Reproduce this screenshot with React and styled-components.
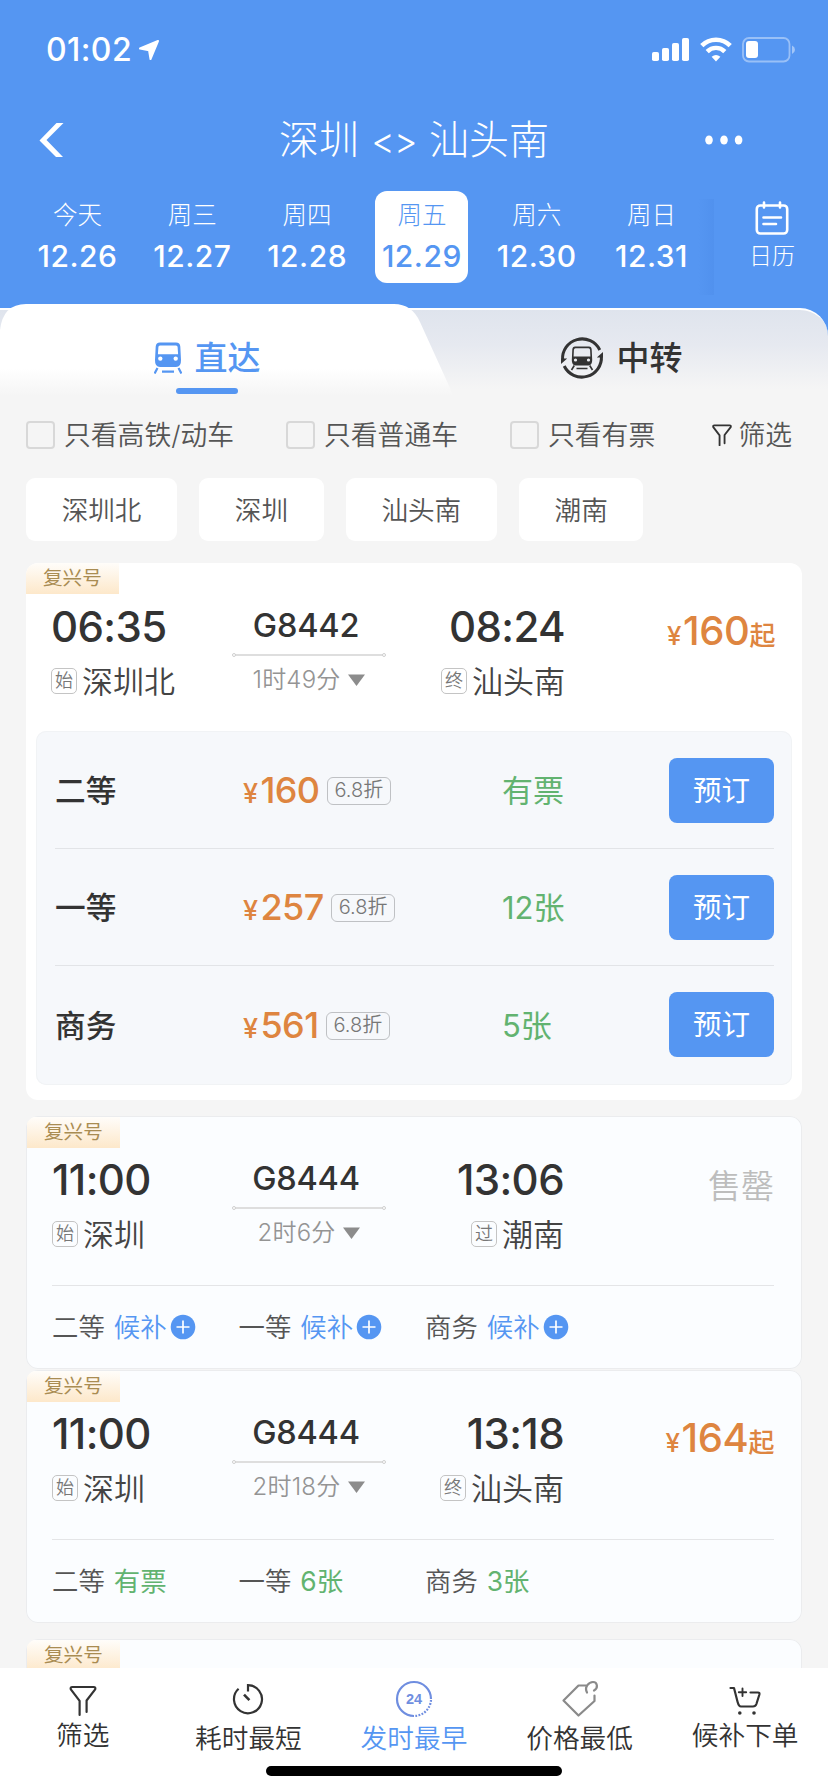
import { useState } from 'react';
import styled, { createGlobalStyle } from 'styled-components';

const BLUE = '#5596f2';
const ORANGE = '#de8540';
const GREEN = '#62b370';

const GlobalStyle = createGlobalStyle`
  *,
  *::before,
  *::after {
    box-sizing: border-box;
  }

  body {
    margin: 0;
    background: #f5f5f5;
    font-family: Inter, "Noto Sans CJK SC", sans-serif;
    color: #333;
  }

  button {
    font: inherit;
    color: inherit;
    border: 0;
    padding: 0;
    background: none;
  }

  svg {
    display: block;
    flex: none;
  }
`;

const Screen = styled.div`
  display: flex;
  flex-direction: column;
  width: 828px;
  height: 1792px;
  overflow: hidden;
  background: linear-gradient(${BLUE} 380px, #f5f5f5 380px);
`;

const StatusBar = styled.div`
  display: flex;
  align-items: center;
  height: 99px;
  padding: 0 32px 0 46px;
  color: #fff;
`;

const Clock = styled.span`
  font-size: 32px;
  font-weight: 500;
  letter-spacing: 0.4px;
  line-height: 40px;
  margin-right: auto;
  display: flex;
  align-items: center;
  gap: 6px;
`;

const StatusIcons = styled.div`
  display: flex;
  align-items: center;
  gap: 10px;
`;

const NavBar = styled.div`
  display: grid;
  grid-template-columns: 200px 1fr 200px;
  align-items: center;
  height: 82px;
  padding: 0 38px;
  color: #fff;
`;

const RouteTitle = styled.h1`
  margin: 0;
  text-align: center;
  font-size: 40px;
  font-weight: 300;
  line-height: 48px;
  white-space: nowrap;
`;

const Arrows = styled.span`
  margin: 0 1px;
  font-size: 36px;
  letter-spacing: -0.8px;
`;

const MoreButton = styled.button`
  justify-self: end;
  margin-right: 46px;
`;

const DateBar = styled.div`
  display: flex;
  height: 123px;
  padding: 10px 0 0 31px;
  color: #fff;
`;

const Day = styled.button`
  flex: none;
  width: 93px;
  height: 92px;
  margin-right: 21.8px;
  padding-top: 8px;
  display: flex;
  flex-direction: column;
  align-items: center;
  border-radius: 12px;
  background: ${({ $active }) => ($active ? '#fff' : 'transparent')};
  color: ${({ $active }) => ($active ? BLUE : '#fff')};
`;

const DayName = styled.span`
  font-size: 24.5px;
  font-weight: 300;
  line-height: 32px;
`;

const DayDate = styled.span`
  font-size: 30px;
  font-weight: 500;
  line-height: 50px;
  letter-spacing: 0.5px;
  white-space: nowrap;
`;

const Calendar = styled.button`
  position: relative;
  flex: 1;
  padding: 10px 0 0 2px;
  margin-left: -6px;
  height: 113px;
  display: flex;
  flex-direction: column;
  align-items: center;
  color: #fff;
  font-size: 23px;
  font-weight: 300;
  line-height: 42px;

  &::before {
    content: '';
    position: absolute;
    left: -16px;
    top: 8px;
    width: 16px;
    height: 96px;
    background: linear-gradient(to right, rgba(60, 120, 215, 0), rgba(60, 120, 215, 0.16));
  }
`;

const Body = styled.main`
  flex: 1;
  min-height: 0;
  display: flex;
  flex-direction: column;
  overflow: hidden;
`;

const Tabs = styled.div`
  display: grid;
  grid-template-columns: 414px 414px;
  position: relative;
  flex: none;
  height: 92px;

  &::before {
    content: '';
    position: absolute;
    inset: 4px 0 0;
    border-top: 2px solid #fff;
    border-radius: 0 28px 0 0;
    background: linear-gradient(#dfe4ed, #e6e9f0 40%, #f5f5f5 92%);
  }

  &::after {
    content: '';
    position: absolute;
    inset: 0;
    background: linear-gradient(#fff 70%, #f5f5f5);
    clip-path: path('M0 92V26Q3 0 26 0H394Q412 0 420 18L450 84Q452 88 452 92Z');
  }
`;

const Tab = styled.button`
  position: relative;
  z-index: 1;
  display: flex;
  align-items: center;
  justify-content: center;
  height: 92px;
  padding-top: 16px;
  gap: 13px;
  font-size: 33px;
  font-weight: 500;
  line-height: 40px;
  color: ${({ $active }) => ($active ? BLUE : '#333')};

  ${({ $active }) => $active && `
    &::after {
      content: '';
      position: absolute;
      left: 176px;
      bottom: 2px;
      width: 62px;
      height: 6px;
      border-radius: 3px;
      background: ${BLUE};
    }
  `}
`;

const Content = styled.div`
  flex: 1;
  min-height: 0;
  padding: 24px 26px 0;
  background: #f5f5f5;
`;

const Filters = styled.div`
  display: flex;
  align-items: center;
  height: 30px;
  color: #555;
  font-size: 26.8px;
  font-weight: 350;
  line-height: 30px;
`;

const Check = styled.label`
  display: flex;
  align-items: center;
  gap: 9px;
  width: ${({ $width }) => $width}px;
  white-space: nowrap;
`;

const Box = styled.span`
  flex: none;
  width: 29px;
  height: 28px;
  border: 2px solid #d8d8d8;
  border-radius: 4px;
`;

const FilterLink = styled.button`
  display: flex;
  align-items: center;
  gap: 6px;
  margin-left: auto;
  margin-right: 10px;
  line-height: 30px;
`;

const Chips = styled.div`
  display: flex;
  gap: 22px;
  margin-top: 28px;
`;

const Chip = styled.button`
  height: 63px;
  padding: 0 35.7px;
  border-radius: 9px;
  background: #fff;
  color: #555;
  font-size: 26.6px;
  font-weight: 350;
  line-height: 64px;
`;

const TrainCard = styled.article`
  position: relative;
  height: ${({ $open }) => ($open ? 537 : 253)}px;
  margin-top: ${({ $gap }) => $gap}px;
  padding: 42px 28px 0 26px;
  border-radius: 12px;
  overflow: hidden;
  background: ${({ $open }) => ($open ? '#fff' : '#fbfdff')};
  box-shadow: ${({ $open }) => ($open ? 'none' : 'inset 0 0 0 1px #ebecee')};
`;

const ModelBadge = styled.span`
  position: absolute;
  left: ${({ $open }) => ($open ? 0 : 1)}px;
  top: ${({ $open }) => ($open ? 0 : 1)}px;
  width: 93px;
  height: 31px;
  padding-left: 17px;
  background: linear-gradient(#fffdfa, #fde8ca);
  color: #a98c52;
  font-size: 19.6px;
  line-height: 31px;
`;

const Trip = styled.div`
  display: grid;
  grid-template-columns: 180px 154px 178px 1fr;

  ${({ $open }) => $open && `
    grid-template-columns: 181px 154px 179px 1fr;
    margin: 0 -1px;
  `}
`;

const Stop = styled.div`
  display: flex;
  flex-direction: column;
  align-items: ${({ $end }) => ($end ? 'flex-end' : 'flex-start')};
`;

const Time = styled.span`
  font-size: 42px;
  font-weight: 500;
  line-height: 44px;
  letter-spacing: -0.6px;
`;

const Station = styled.span`
  display: flex;
  align-items: center;
  gap: 5px;
  margin-top: 13px;
  color: #444;
  font-size: 31px;
  font-weight: 350;
  line-height: 40px;
`;

const StopType = styled.span`
  display: grid;
  place-items: center;
  width: 26px;
  height: 26px;
  margin-top: -2px;
  border: 1.5px solid #c4c4c4;
  border-radius: 5px;
  color: #777;
  font-size: 18px;
  line-height: 22px;
`;

const TrainInfo = styled.div`
  display: flex;
  flex-direction: column;
  align-items: center;
`;

const TrainNo = styled.span`
  padding-right: 6px;
  font-size: 32.5px;
  line-height: 42px;
  font-weight: 500;
  letter-spacing: -0.2px;
`;

const Line = styled.span`
  position: relative;
  width: 148px;
  height: 2px;
  margin-top: 7px;
  background: #dedede;

  &::before,
  &::after {
    content: '';
    position: absolute;
    top: -1px;
    width: 4px;
    height: 4px;
    border: 1px solid #cfcfcf;
    border-radius: 50%;
    background: #fff;
  }

  &::before {
    left: -3px;
  }

  &::after {
    right: -3px;
  }
`;

const Duration = styled.span`
  display: flex;
  align-items: center;
  gap: 8px;
  margin-top: 8px;
  color: #949494;
  font-size: 24px;
  font-weight: 350;
  line-height: 32px;
  letter-spacing: 0.2px;
`;

const Fare = styled.div`
  justify-self: end;
  display: flex;
  align-items: baseline;
  height: 48px;
  padding-top: 4px;
  color: ${ORANGE};
  font-size: 40px;
  font-weight: 500;
  line-height: 44px;
  letter-spacing: -0.4px;
`;

const Small = styled.span`
  font-size: ${({ $size }) => $size}px;
  margin-right: ${({ $gap }) => $gap || 0}px;
`;

const SoldOut = styled.span`
  justify-self: end;
  padding-top: 6px;
  color: #bdbdbd;
  font-size: 33px;
  font-weight: 350;
  line-height: 44px;
`;

const SeatPanel = styled.div`
  margin: 29px -18px 0 -16px;
  padding: 1px 18px 2px 19px;
  border-radius: 10px;
  background: #f6f8fb;
  box-shadow: inset 0 0 0 1px #f1f3f5;
`;

const SeatRow = styled.div`
  display: grid;
  grid-template-columns: 188px 258px 1fr 105px;
  align-items: center;
  height: 117px;
  border-bottom: ${({ $last }) => ($last ? 0 : '1px solid #e2e4e7')};
`;

const SeatName = styled.span`
  padding-top: 2px;
  font-size: 30.7px;
  font-weight: 500;
  line-height: 40px;
`;

const SeatPrice = styled.span`
  display: flex;
  align-items: baseline;
  padding-top: 4px;
  color: ${ORANGE};
  font-size: 36px;
  font-weight: 500;
  line-height: 44px;
  letter-spacing: -0.6px;
`;

const Discount = styled.span`
  align-self: center;
  margin: -2px 0 0 7px;
  padding: 0 7px;
  height: 28px;
  border: 1.5px solid #bfc1c4;
  border-radius: 6px;
  color: #777;
  font-size: 20px;
  font-weight: 350;
  line-height: 25px;
  letter-spacing: 0;
`;

const SeatStock = styled.span`
  padding: 2px 0 0 1px;
  color: ${GREEN};
  font-size: 31px;
  font-weight: 400;
  line-height: 40px;
`;

const BookButton = styled.button`
  height: 65px;
  border-radius: 8px;
  background: ${BLUE};
  color: #fff;
  font-size: 28.5px;
  line-height: 65px;
`;

const SeatSummary = styled.div`
  display: grid;
  grid-template-columns: 186.5px 186.5px 1fr;
  align-items: center;
  height: 83px;
  margin-top: 30px;
  border-top: 1px solid #e4e5e7;
  color: #555;
  font-size: 26.4px;
  font-weight: 350;
  line-height: 36px;
`;

const SeatState = styled.span`
  display: flex;
  align-items: center;
  gap: 9px;
`;

const Stock = styled.span`
  display: flex;
  align-items: center;
  gap: 3px;
  color: ${({ $wait }) => ($wait ? BLUE : GREEN)};
  font-weight: ${({ $wait }) => ($wait ? 350 : 400)};
`;

const SortBar = styled.nav`
  flex: none;
  height: 124px;
  background: #fff;
  display: flex;
  flex-direction: column;
  align-items: center;
`;

const SortItems = styled.div`
  display: grid;
  grid-template-columns: repeat(5, 1fr);
  width: 100%;
  height: 98px;
`;

const SortItem = styled.button`
  display: flex;
  flex-direction: column;
  align-items: center;
  padding-top: ${({ $tight }) => ($tight ? 17 : 12)}px;
  color: ${({ $active }) => ($active ? BLUE : '#333')};
  font-size: 26.7px;
  font-weight: 350;
  line-height: 36px;

  svg {
    margin-bottom: ${({ $tight }) => ($tight ? 0 : 2)}px;
  }
`;

const HomeIndicator = styled.span`
  width: 296px;
  height: 10px;
  border-radius: 5px;
  background: #000;
`;

const LocationIcon = () => (
  <svg width="22" height="22" viewBox="0 0 22 22" fill="#fff" stroke="#fff" strokeWidth="2" strokeLinejoin="round">
    <path d="M20 2L2 9.5L11 11.2L12.5 20Z" />
  </svg>
);

const SignalIcon = () => (
  <svg width="38" height="26" viewBox="0 0 38 26" fill="#fff">
    <rect x="0" y="15" width="7" height="9" rx="1.8" />
    <rect x="10" y="11" width="7" height="13" rx="1.8" />
    <rect x="20" y="6" width="7" height="18" rx="1.8" />
    <rect x="30" y="1" width="7" height="23" rx="1.8" />
  </svg>
);

const WifiIcon = () => (
  <svg width="32" height="26" viewBox="0 0 32 26" fill="none" stroke="#fff">
    <path d="M1.8 8.6A20 20 0 0 1 30.2 8.6" strokeWidth="4.6" />
    <path d="M7.2 14.6A12.3 12.3 0 0 1 24.8 14.6" strokeWidth="4.4" />
    <path d="M16 24.5L11.6 19.8Q16 16.2 20.4 19.8Z" fill="#fff" stroke="none" />
  </svg>
);

const BatteryIcon = () => (
  <svg width="54" height="26" viewBox="0 0 54 26">
    <rect x="1" y="1" width="46.5" height="23.5" rx="6" fill="none" stroke="#fff" strokeOpacity="0.4" strokeWidth="1.8" />
    <rect x="4" y="4" width="12" height="17" rx="3" fill="#fff" />
    <path d="M50 8.5Q53 10 53 12.8T50 17Z" fill="#fff" fillOpacity="0.45" />
  </svg>
);

const BackIcon = () => (
  <svg width="26" height="36" viewBox="0 0 26 36" fill="#fff">
    <path d="M18.5 1H25.5L8.5 18L25 35H18L1.5 18.5Z" />
  </svg>
);

const MoreIcon = () => (
  <svg width="40" height="12" viewBox="0 0 40 12" fill="#fff">
    <ellipse cx="5" cy="6" rx="3.8" ry="4.5" />
    <ellipse cx="20" cy="6" rx="3.8" ry="4.5" />
    <ellipse cx="34.6" cy="6" rx="3.8" ry="4.5" />
  </svg>
);

const CalendarIcon = () => (
  <svg width="34" height="34" viewBox="0 0 34 34" fill="none" stroke="#fff" strokeWidth="2.6" strokeLinecap="round">
    <rect x="1.8" y="4.5" width="30.4" height="28" rx="3.5" />
    <path d="M9 1.5V6.5M25 1.5V6.5M8.5 16.5H26M8.5 23H21" />
  </svg>
);

const TrainIcon = () => (
  <svg width="28" height="32" viewBox="0 0 28 32" fill={BLUE}>
    <path fillRule="evenodd" d="M6 0.5H22Q26 0.5 26.3 4.5L27 18Q27.2 25 22 25H6Q0.8 25 1 18L1.7 4.5Q2 0.5 6 0.5ZM6 3.5Q4.5 3.5 4.4 5L3.9 12.3H24.1L23.6 5Q23.5 3.5 22 3.5ZM6.3 14.4A2.2 2.2 0 1 0 6.3 18.8A2.2 2.2 0 1 0 6.3 14.4ZM21.7 14.4A2.2 2.2 0 1 0 21.7 18.8A2.2 2.2 0 1 0 21.7 14.4Z" />
    <path d="M3.5 26L0.6 31.5M24.5 26L27.4 31.5M8 29.6H20" stroke={BLUE} strokeWidth="2.2" />
  </svg>
);

const TransferIcon = () => (
  <svg width="44" height="44" viewBox="0 0 44 44" fill="none" stroke="#333">
    <path d="M2.6 24A19.6 19.6 0 0 1 39.8 14" strokeWidth="3" />
    <path d="M41.4 20A19.6 19.6 0 0 1 4.2 30" strokeWidth="3" />
    <path d="M1 28V22.4L7.2 22.6Z M43 16V21.6L36.8 21.4Z" fill="#333" stroke="none" />
    <path fillRule="evenodd" fill="#333" stroke="none" d="M15 10.5H29Q31.5 10.5 31.7 13.5L32.2 24Q32.2 29.4 28.5 29.4H15.5Q11.8 29.4 11.8 24L12.3 13.5Q12.5 10.5 15 10.5ZM15.5 12.3Q14 12.3 13.9 14L13.6 20.5H30.4L30.1 14Q30 12.3 28.5 12.3ZM15.5 22.4A1.6 1.6 0 1 0 15.5 25.6A1.6 1.6 0 1 0 15.5 22.4ZM28.5 22.4A1.6 1.6 0 1 0 28.5 25.6A1.6 1.6 0 1 0 28.5 22.4Z" />
    <path d="M14.3 29.5L11.5 34M29.7 29.5L32.5 34M16.5 32.5H27.5" strokeWidth="1.6" />
  </svg>
);

const FunnelIcon = ({ size, stroke }) => (
  <svg width={size} height={size * 1.14} viewBox="0 0 28 32" fill="none" stroke="#333" strokeWidth={stroke} strokeLinecap="round" strokeLinejoin="round">
    <path d="M10.6 30V16L1.8 4.4Q1 2 3.4 2H24.6Q27 2 26.2 4.4L17.6 15.5V27" />
  </svg>
);

const CaretIcon = () => (
  <svg width="17" height="12" viewBox="0 0 17 12" fill="#8c8c8c">
    <path d="M0 0.5H17L8.5 12Z" />
  </svg>
);

const PlusIcon = () => (
  <svg width="26" height="26" viewBox="0 0 26 26">
    <circle cx="13" cy="13" r="12.3" fill={BLUE} />
    <path d="M6.5 13H19.5M13 6.5V19.5" stroke="#fff" strokeWidth="1.7" />
  </svg>
);

const TimerIcon = () => (
  <svg width="38" height="38" viewBox="0 0 38 38" fill="none" stroke="#333" strokeWidth="2.2">
    <path d="M9.6 8.8A14 14 0 1 0 19 5.2V11.5" />
    <path d="M15 14.6L20.4 20.2" strokeWidth="2.6" />
  </svg>
);

const DepartIcon = () => (
  <svg width="38" height="38" viewBox="0 0 38 38" fill="none" stroke="#6f8ee0" strokeWidth="2.2">
    <path d="M19 36A17 17 0 1 1 36 19" />
    <path d="M36 20A17 17 0 0 1 19.5 36" strokeDasharray="1.8 1.4" />
    <text x="19" y="24" textAnchor="middle" fill="#6f8ee0" stroke="none" fontFamily="Liberation Sans, sans-serif" fontSize="14.5" fontWeight="700">24</text>
  </svg>
);

const TagIcon = () => (
  <svg width="38" height="38" viewBox="0 0 38 38" fill="none" stroke="#8a8a8a" strokeWidth="2.2" strokeLinejoin="round" strokeLinecap="round">
    <path d="M25 5.5H17.5L2.5 20.5L17.5 35.5L33.5 21V15.5" />
    <path d="M26 12.5C23 7 28 2 32 2C36.5 2 37.5 8 33 10.5" />
  </svg>
);

const CartIcon = () => (
  <svg width="32" height="32" viewBox="0 0 32 32" fill="none" stroke="#333" strokeWidth="2.2" strokeLinecap="round" strokeLinejoin="round">
    <path d="M1.5 3H5L8.6 17Q9.8 21.5 12 21.5H24Q26.5 21.5 27.4 19L30.4 9.5Q30.8 7.5 29 7.5H21.5" />
    <path d="M13.5 3.5V11M9.8 7.3H17.2" strokeWidth="1.9" />
    <circle cx="10.8" cy="28" r="1.8" fill="#333" stroke="none" />
    <circle cx="25" cy="28" r="1.8" fill="#333" stroke="none" />
  </svg>
);

const days = [
  { name: '今天', date: '12.26' },
  { name: '周三', date: '12.27' },
  { name: '周四', date: '12.28' },
  { name: '周五', date: '12.29' },
  { name: '周六', date: '12.30' },
  { name: '周日', date: '12.31' },
];

const checks = [
  { label: '只看高铁/动车', width: 260 },
  { label: '只看普通车', width: 224 },
  { label: '只看有票', width: 160 },
];

const stations = ['深圳北', '深圳', '汕头南', '潮南'];

const trains = [
  {
    id: 1,
    gap: 22,
    no: 'G8442',
    duration: '1时49分',
    from: { time: '06:35', type: '始', name: '深圳北' },
    to: { time: '08:24', type: '终', name: '汕头南' },
    price: 160,
    open: true,
    seats: [
      { name: '二等', price: 160, stock: '有票' },
      { name: '一等', price: 257, stock: '12张' },
      { name: '商务', price: 561, stock: '5张' },
    ],
  },
  {
    id: 2,
    gap: 16,
    no: 'G8444',
    duration: '2时6分',
    from: { time: '11:00', type: '始', name: '深圳' },
    to: { time: '13:06', type: '过', name: '潮南' },
    seats: [{ name: '二等' }, { name: '一等' }, { name: '商务' }],
  },
  {
    id: 3,
    gap: 1,
    no: 'G8444',
    duration: '2时18分',
    from: { time: '11:00', type: '始', name: '深圳' },
    to: { time: '13:18', type: '终', name: '汕头南' },
    price: 164,
    seats: [
      { name: '二等', stock: '有票' },
      { name: '一等', stock: '6张' },
      { name: '商务', stock: '3张' },
    ],
  },
];

const sorts = [
  { label: '筛选', icon: <FunnelIcon size={28} stroke={2.2} />, tight: true },
  { label: '耗时最短', icon: <TimerIcon /> },
  { label: '发时最早', icon: <DepartIcon /> },
  { label: '价格最低', icon: <TagIcon /> },
  { label: '候补下单', icon: <CartIcon />, tight: true },
];

const StopInfo = ({ stop, end }) => (
  <Stop $end={end}>
    <Time>{stop.time}</Time>
    <Station>
      <StopType>{stop.type}</StopType>
      {stop.name}
    </Station>
  </Stop>
);

const Train = ({ train }) => (
  <TrainCard $open={train.open} $gap={train.gap}>
    <ModelBadge $open={train.open}>复兴号</ModelBadge>
    <Trip $open={train.open}>
      <StopInfo stop={train.from} />
      <TrainInfo>
        <TrainNo>{train.no}</TrainNo>
        <Line />
        <Duration>
          {train.duration}
          <CaretIcon />
        </Duration>
      </TrainInfo>
      <StopInfo stop={train.to} end />
      {train.price ? (
        <Fare>
          <Small $size={26} $gap={2}>¥</Small>
          {train.price}
          <Small $size={26}>起</Small>
        </Fare>
      ) : (
        <SoldOut>售罄</SoldOut>
      )}
    </Trip>
    {train.open ? (
      <SeatPanel>
        {train.seats.map((seat, i) => (
          <SeatRow key={seat.name} $last={i === train.seats.length - 1}>
            <SeatName>{seat.name}</SeatName>
            <SeatPrice>
              <Small $size={27} $gap={3}>¥</Small>
              {seat.price}
              <Discount>6.8折</Discount>
            </SeatPrice>
            <SeatStock>{seat.stock}</SeatStock>
            <BookButton>预订</BookButton>
          </SeatRow>
        ))}
      </SeatPanel>
    ) : (
      <SeatSummary>
        {train.seats.map((seat) => (
          <SeatState key={seat.name}>
            {seat.name}
            {seat.stock ? (
              <Stock>{seat.stock}</Stock>
            ) : (
              <Stock $wait>
                候补
                <PlusIcon />
              </Stock>
            )}
          </SeatState>
        ))}
      </SeatSummary>
    )}
  </TrainCard>
);

const App = () => {
  const [day, setDay] = useState('12.29');
  const [tab, setTab] = useState('direct');
  const [sort, setSort] = useState('发时最早');

  return (
    <Screen>
      <GlobalStyle />
      <StatusBar>
        <Clock>
          01:02
          <LocationIcon />
        </Clock>
        <StatusIcons>
          <SignalIcon />
          <WifiIcon />
          <BatteryIcon />
        </StatusIcons>
      </StatusBar>
      <NavBar>
        <button type="button"><BackIcon /></button>
        <RouteTitle>
          深圳 <Arrows>&lt;&gt;</Arrows> 汕头南
        </RouteTitle>
        <MoreButton><MoreIcon /></MoreButton>
      </NavBar>
      <DateBar>
        {days.map((d) => (
          <Day key={d.date} $active={d.date === day} onClick={() => setDay(d.date)}>
            <DayName>{d.name}</DayName>
            <DayDate>{d.date}</DayDate>
          </Day>
        ))}
        <Calendar>
          <CalendarIcon />
          日历
        </Calendar>
      </DateBar>
      <Body>
        <Tabs>
          <Tab $active={tab === 'direct'} onClick={() => setTab('direct')}>
            <TrainIcon />
            直达
          </Tab>
          <Tab $active={tab === 'transfer'} onClick={() => setTab('transfer')}>
            <TransferIcon />
            中转
          </Tab>
        </Tabs>
        <Content>
          <Filters>
            {checks.map((c) => (
              <Check key={c.label} $width={c.width}>
                <Box />
                {c.label}
              </Check>
            ))}
            <FilterLink>
              <FunnelIcon size={20} stroke={2.6} />
              筛选
            </FilterLink>
          </Filters>
          <Chips>
            {stations.map((s) => <Chip key={s}>{s}</Chip>)}
          </Chips>
          {trains.map((train) => <Train key={train.id} train={train} />)}
          <TrainCard $gap={16}>
            <ModelBadge>复兴号</ModelBadge>
          </TrainCard>
        </Content>
      </Body>
      <SortBar>
        <SortItems>
          {sorts.map((s) => (
            <SortItem
              key={s.label}
              $active={s.label === sort}
              $tight={s.tight}
              onClick={() => setSort(s.label)}
            >
              {s.icon}
              {s.label}
            </SortItem>
          ))}
        </SortItems>
        <HomeIndicator />
      </SortBar>
    </Screen>
  );
};

export default App;
